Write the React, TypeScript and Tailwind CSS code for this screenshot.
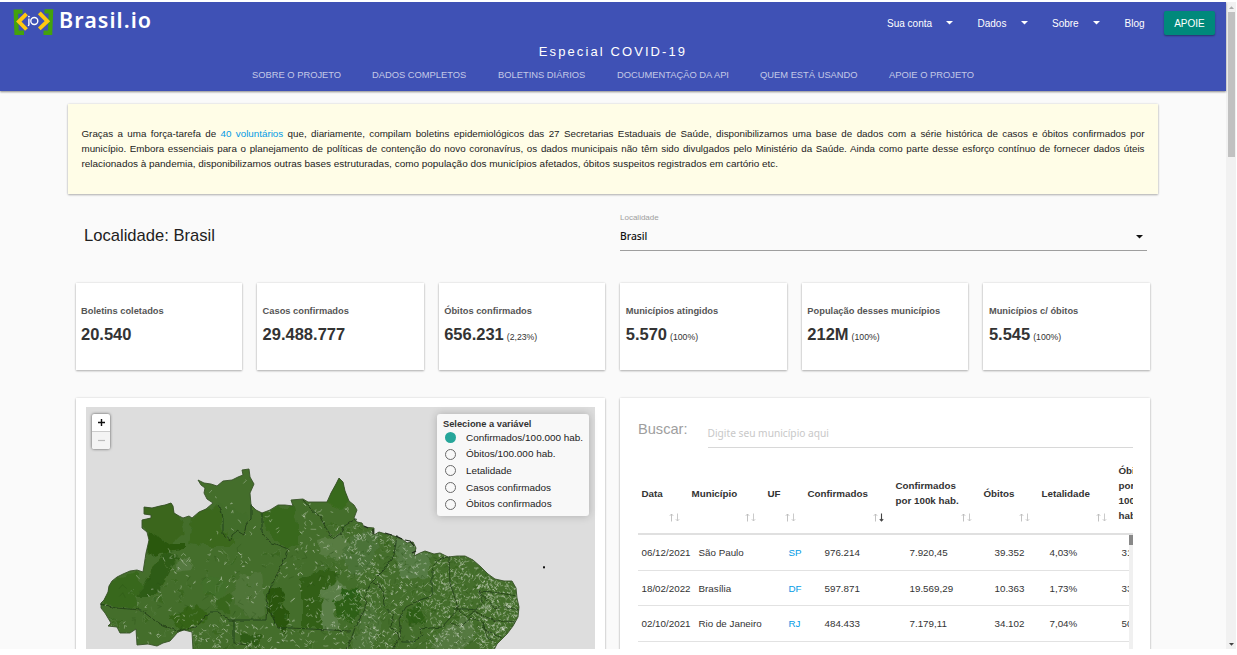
import React from "react";

const OUTLINE =
  "M101 603 L104 600 L108 592 L109 586 L112 581 L117 577 L123 574 L130 571 L137 570 L143 572 L146 553 L149 540 L147 532 L142 528 L142 520 L151 518 L151 515 L144 514 L144 507 L152 508 L160 506 L165 505 L171 503 L173 506 L174 513 L179 516 L183 518 L189 516 L192 518 L199 512 L206 509 L213 503 L207 499 L204 493 L205 488 L201 485 L198 480 L204 483 L211 484 L217 486 L223 481 L232 480 L238 477 L243 475 L242 470 L249 469 L250 477 L254 484 L250 493 L251 505 L256 510 L262 513 L270 510 L278 505 L285 505 L293 506 L291 500 L303 499 L308 502 L315 502 L327 502 L331 493 L336 484 L339 478 L343 482 L345 491 L349 501 L354 505 L357 510 L354 518 L357 522 L362 523 L364 527 L374 528 L374 535 L379 532 L386 534 L394 536 L402 539 L407 543 L413 542 L416 548 L414 556 L420 553 L425 551 L434 554 L440 553 L448 557 L457 556 L465 556 L473 560 L481 567 L488 574 L495 579 L504 581 L512 581 L516 588 L517 598 L519 607 L518 617 L513 626 L507 634 L502 639 L497 644 L494 650 L193 650 L192 632 L184 630 L178 632 L170 641 L163 643 L157 646 L148 644 L137 645 L136 629 L130 633 L120 633 L117 627 L108 626 L111 623 L105 613 L101 608 Z";

const PATCHES: [string, string][] = [
  ["M144 503 L172 500 L180 518 L185 532 L168 547 L149 540 L142 522Z", "#3a661d"],
  ["M148 531 L160 538 L170 543 L185 543 L185 551 L160 553 L152 556 L146 550Z", "#2c5810"],
  ["M192 518 L219 503 L223 528 L233 546 L206 546 L188 544Z", "#3b681e"],
  ["M165 552 L178 556 L165 580 L157 595 L138 595 L151 570Z", "#2f5c14"],
  ["M104 605 L110 581 L138 571 L142 590 L136 600 L141 609Z", "#38671e"],
  ["M262 513 L293 505 L299 528 L299 545 L287 549 L267 534Z", "#38681d"],
  ["M218 502 L230 508 L248 515 L244 535 L232 541 L224 526Z", "#426d2a"],
  ["M272 586 L285 591 L282 603 L289 612 L289 636 L278 628 L271 616 L266 597Z", "#295610"],
  ["M301 577 L325 570 L339 573 L334 588 L321 594 L323 628 L301 628Z", "#305f16"],
  ["M321 591 L340 580 L351 592 L337 599 L334 613 L340 629 L323 629Z", "#5a7e46"],
  ["M335 601 L353 590 L362 604 L353 624 L338 616Z", "#2e6017"],
  ["M334 485 L339 477 L347 490 L349 503 L340 510 L327 502Z", "#386b1b"],
  ["M318 540 L342 534 L351 548 L342 561 L320 556Z", "#587c43"],
  ["M170 617 L198 604 L207 618 L193 627 L179 632Z", "#356419"],
  ["M241 632 L262 636 L258 646 L243 642Z", "#2e5c14"],
  ["M356 532 L381 530 L371 566 L354 578 L341 555Z", "#4c7338"],
  ["M395 535 L409 538 L418 554 L432 552 L428 577 L401 580Z", "#567b44"],
  ["M406 611 L421 602 L425 620 L409 626Z", "#2e5e15"],
  ["M440 630 L466 616 L476 631 L463 650 L429 650Z", "#547941"],
  ["M341 588 L357 589 L360 599 L343 601Z", "#2b5e12"],
  ["M365 610 L375 602 L381 629 L370 650 L350 650Z", "#4e7538"],
  ["M178 560 L189 556 L191 569 L176 571Z", "#54793f"],
  ["M239 575 L262 572 L266 615 L249 619 L232 597Z", "#507439"],
  ["M215 594 L231 595 L230 615 L217 610Z", "#38661f"],
  ["M203 577 L213 575 L231 585 L218 600 L201 590Z", "#42702a"],
];

const BORDERS = [
  "M101 604 L116 608 L141 610 L158 623 L177 631 L196 627 L206 616 L212 612 L218 612 L229 620 L266 620 L267 607 L266 597 L289 549",
  "M269 609 L278 628 L291 628 L350 631",
  "M218 505 L221 510 L223 518 L223 534 L231 541 L232 535 L237 531 L244 535 L246 525 L251 519 L251 505",
  "M262 513 L262 533 L270 542 L288 549",
  "M303 500 L310 508 L320 517 L326 528 L333 539 L341 533 L343 527 L357 518",
  "M397 536 L394 555 L384 570 L371 583 L366 594 L365 609 L355 628 L347 650",
  "M371 583 L379 584 L383 593 L384 605 L393 615 L391 627 L398 634 L401 642 L414 642 L423 635 L420 629 L442 627 L458 609 L454 595 L450 583 L449 557",
  "M448 557 L436 561 L432 571 L432 596 L418 601 L406 607 L399 619 L401 636",
  "M454 609 L467 609 L476 610 L482 602 L479 591 L493 592 L517 596",
  "M479 591 L487 600 L495 609 L503 606 L519 610",
  "M459 610 L467 617 L475 611 L483 616 L496 621 L515 623",
  "M450 622 L460 627 L471 618 L482 622 L485 630 L502 638",
  "M483 622 L487 637 L497 644",
  "M234 620 L234 643 L246 645 L252 650",
  "M401 635 L392 650",
];

// Deterministic generator, so the municipal mesh is stable between renders.
function makeRandom(seed: number) {
  let s = seed;
  return () => {
    s = (s * 1664525 + 1013904223) % 4294967296;
    return s / 4294967296;
  };
}

function mesh(seed: number, n: number, x0: number, y0: number, w: number, h: number, len: number) {
  const r = makeRandom(seed);
  let d = "";
  for (let i = 0; i < n; i++) {
    const x = x0 + r() * w;
    const y = y0 + r() * h;
    const a = (r() - 0.5) * 2 * len;
    const b = (r() - 0.5) * 2 * len;
    const c = (r() - 0.5) * 2 * len;
    const e = (r() - 0.5) * 2 * len;
    d += `M${x.toFixed(1)} ${y.toFixed(1)}l${a.toFixed(1)} ${b.toFixed(1)}l${c.toFixed(1)} ${e.toFixed(1)}`;
  }
  return d;
}

const LIGHT = [
  mesh(7, 120, 100, 550, 200, 100, 3),
  mesh(9, 50, 205, 475, 160, 90, 3),
  mesh(21, 190, 300, 510, 80, 140, 3),
  mesh(35, 420, 355, 530, 110, 120, 2.8),
  mesh(43, 360, 430, 555, 92, 95, 2.5),
  mesh(57, 270, 478, 580, 42, 68, 2.4),
  mesh(81, 90, 180, 625, 130, 25, 3),
].join("");
const DARK = [
  mesh(12, 70, 100, 550, 260, 100, 5),
  mesh(15, 200, 355, 530, 165, 120, 4),
].join("");
const TONE = [
  mesh(91, 70, 110, 550, 200, 100, 7),
  mesh(95, 220, 320, 520, 200, 130, 6),
].join("");

function BrazilMap() {
  return (
    <svg className="block h-[242px] w-[509px]" viewBox="86 407 509 242">
      <defs>
        <clipPath id="land">
          <path d={OUTLINE} />
        </clipPath>
        <filter id="rough" x="-5%" y="-5%" width="110%" height="110%">
          <feTurbulence type="fractalNoise" baseFrequency="0.11" numOctaves="2" seed="4" />
          <feDisplacementMap in="SourceGraphic" scale="10" xChannelSelector="R" yChannelSelector="G" />
        </filter>
        <filter id="wavy" x="-5%" y="-5%" width="110%" height="110%">
          <feTurbulence type="fractalNoise" baseFrequency="0.2" numOctaves="2" seed="8" />
          <feDisplacementMap in="SourceGraphic" scale="3.5" xChannelSelector="R" yChannelSelector="G" />
        </filter>
      </defs>
      <path d={OUTLINE} fill="#446e2b" />
      <g clipPath="url(#land)">
        <g filter="url(#rough)">
          {PATCHES.map(([d, fill]) => (
            <path key={d} d={d} fill={fill} />
          ))}
          <path d={TONE} fill="#2f6015" fillOpacity="0.5" stroke="#6a8d57" strokeOpacity="0.4" strokeWidth="0.9" />
        </g>
        <path d={DARK} fill="none" stroke="#294f17" strokeOpacity="0.4" strokeWidth="0.7" />
        <path d={LIGHT} fill="none" stroke="#dfe7da" strokeOpacity="0.6" strokeWidth="0.6" />
      </g>
      <path d={OUTLINE} fill="none" stroke="#385128" strokeWidth="0.9" />
      <g filter="url(#wavy)">
        {BORDERS.map((d) => (
          <path key={d} d={d} fill="none" stroke="#203b17" strokeWidth="0.8" strokeLinejoin="round" />
        ))}
      </g>
      <path d="M364 526l4 2m5 1v5m12-1l7 2m4 1l6 3m3 1l5 1l4 5m-2 7l4-2" stroke="#1d2b18" strokeWidth="1.2" fill="none" />
      <rect x="543" y="566.300" width="2" height="2" fill="#111" />
    </svg>
  );
}

function Logo() {
  return (
    <svg className="h-[28px] w-[42px] shrink-0" viewBox="12 7 42 28" fill="none">
      <path d="M22.500 11.600H15.800L16.600 32.800H24" stroke="#43a20b" strokeWidth="4.400" />
      <path d="M44.500 11.400H51L50.100 32.800H43.500" stroke="#43a20b" strokeWidth="4.400" />
      <path d="M26.500 13.800L18.800 21.500L26.500 29.500" stroke="#ffc810" strokeWidth="3.900" />
      <path d="M39.300 12.800L47.400 21.200L39.300 28.800" stroke="#ffc810" strokeWidth="3.900" />
      <path d="M28.900 18.600V24.800L28.200 26" stroke="#fff" strokeWidth="1.400" />
      <circle cx="28.900" cy="16.600" r="0.900" fill="#fff" />
      <circle cx="34.300" cy="21" r="3.500" stroke="#fff" strokeWidth="1.400" />
    </svg>
  );
}

function Caret({ className }: { className: string }) {
  return (
    <svg className={className} viewBox="0 0 7 4">
      <path d="M0 0H7L3.500 3.600Z" fill="currentColor" />
    </svg>
  );
}

const MENU = [
  { label: "Sua conta", w: "w-[90.500px]", gap: "w-[59px]" },
  { label: "Dados", w: "w-[74.500px]", gap: "w-[43px]" },
  { label: "Sobre", w: "w-[72.500px]", gap: "w-[41px]" },
];

const TABS = [
  { label: "SOBRE O PROJETO", w: "w-[120px]" },
  { label: "DADOS COMPLETOS", w: "w-[126px]" },
  { label: "BOLETINS DIÁRIOS", w: "w-[119px]" },
  { label: "DOCUMENTAÇÃO DA API", w: "w-[143px]" },
  { label: "QUEM ESTÁ USANDO", w: "w-[129px]" },
  { label: "APOIE O PROJETO", w: "w-[100px]" },
];

const STATS = [
  { label: "Boletins coletados", value: "20.540", extra: "" },
  { label: "Casos confirmados", value: "29.488.777", extra: "" },
  { label: "Óbitos confirmados", value: "656.231", extra: "(2,23%)" },
  { label: "Municípios atingidos", value: "5.570", extra: "(100%)" },
  { label: "População desses municípios", value: "212M", extra: "(100%)" },
  { label: "Municípios c/ óbitos", value: "5.545", extra: "(100%)" },
];

const VARIABLES = [
  "Confirmados/100.000 hab.",
  "Óbitos/100.000 hab.",
  "Letalidade",
  "Casos confirmados",
  "Óbitos confirmados",
];

const COLUMNS = [
  ["Data"],
  ["Município"],
  ["UF"],
  ["Confirmados"],
  ["Confirmados", "por 100k hab."],
  ["Óbitos"],
  ["Letalidade"],
  ["Óbitos", "por", "100k", "hab."],
];

const ROWS = [
  ["06/12/2021", "São Paulo", "SP", "976.214", "7.920,45", "39.352", "4,03%", "319"],
  ["18/02/2022", "Brasília", "DF", "597.871", "19.569,29", "10.363", "1,73%", "339"],
  ["02/10/2021", "Rio de Janeiro", "RJ", "484.433", "7.179,11", "34.102", "7,04%", "505"],
];

const SHADOW = "shadow-[0_1px_2px_rgba(0,0,0,0.28),0_0_2px_rgba(0,0,0,0.12)]";

function SortArrows({ active }: { active: boolean }) {
  return (
    <svg className="h-[9px] w-[11px]" viewBox="0 0 11 9" fill="none" strokeWidth="0.9">
      <path d="M2.500 8.500V1M0.800 2.800L2.500 1L4.200 2.800" stroke="#bbb" />
      <path d="M8.500 0.500V8M6.800 6.200L8.500 8L10.200 6.200" stroke={active ? "#444" : "#c4c4c4"} strokeWidth={active ? 1.1 : 0.9} />
    </svg>
  );
}

function Header() {
  return (
    <header className="relative z-10 flex h-[89px] w-[1226px] flex-col bg-[#3f51b5] text-white shadow-[0_1px_2px_rgba(0,0,0,0.45)]">
      <div className="flex h-[41px] justify-between">
        <div className="flex items-start pt-[5px] pl-[12px]">
          <Logo />
          <span className="ml-[5px] font-['Noto_Sans'] text-[21.5px] leading-[25px] font-semibold tracking-[1.05px]">
            Brasil.io
          </span>
        </div>
        <nav className="flex h-[42px] items-center pl-px text-[10px]">
          {MENU.map((m) => (
            <div key={m.label} className={`flex items-center ${m.w}`}>
              <span className={m.gap}>{m.label}</span>
              <Caret className="h-[4px] w-[7px]" />
            </div>
          ))}
          <span className="w-[39.500px]">Blog</span>
          <button className="mr-[11px] h-[24px] w-[51px] rounded-[2px] bg-[#00897b] text-[10px] shadow-[0_1px_2px_rgba(0,0,0,0.4)]">
            APOIE
          </button>
        </nav>
      </div>
      <div className="flex h-[16px] items-center justify-center pt-[1px] text-[13px] tracking-[2.1px]">
        Especial COVID-19
      </div>
      <div className="flex h-[32px] items-center pt-px pl-[252px] text-[9.35px] whitespace-nowrap text-white/70">
        {TABS.map((t) => (
          <span key={t.label} className={t.w}>
            {t.label}
          </span>
        ))}
      </div>
    </header>
  );
}

function Intro() {
  return (
    <section className={`mt-[13px] ml-[68px] h-[90px] w-[1090px] bg-[#fffde7] px-[13.500px] pt-[22px] leading-[15px] whitespace-nowrap text-[#222] ${SHADOW}`}>
      <p className="w-[1063px] text-[9.8px] [text-align-last:justify]">
        Graças a uma força-tarefa de <a className="text-[#039be5]">40 voluntários</a> que, diariamente, compilam boletins
        epidemiológicos das 27 Secretarias Estaduais de Saúde, disponibilizamos uma base de dados com a série histórica de
        casos e óbitos confirmados por
      </p>
      <p className="w-[1063px] text-[9.8px] [text-align-last:justify]">
        município. Embora essenciais para o planejamento de políticas de contenção do novo coronavírus, os dados municipais
        não têm sido divulgados pelo Ministério da Saúde. Ainda como parte desse esforço contínuo de fornecer dados úteis
      </p>
      <p className="text-[9.96px]">
        relacionados à pandemia, disponibilizamos outras bases estruturadas, como população dos municípios afetados, óbitos
        suspeitos registrados em cartório etc.
      </p>
    </section>
  );
}

function Place() {
  return (
    <section className="flex h-[89px] pl-[84px]">
      <h1 className="w-[536px] pt-[30px] text-[16.6px] leading-[24px] text-[#212121]">Localidade: Brasil</h1>
      <div className="w-[527px] pt-[19px]">
        <div className="text-[8px] leading-[10px] text-[#9e9e9e]">Localidade</div>
        <div className="flex h-[28px] items-center justify-between border-b border-[#9e9e9e] pr-[4px] text-[#111]">
          <span className="font-['Noto_Sans'] text-[10.3px] font-medium">Brasil</span>
          <Caret className="h-[4px] w-[7px]" />
        </div>
      </div>
    </section>
  );
}

function MapCard() {
  return (
    <section className={`h-[300px] w-[529px] bg-white px-[10px] pt-[9px] ${SHADOW}`}>
      <div className="relative h-[242px] w-[509px] bg-[#ddd]">
        <BrazilMap />
        <div className="absolute top-[7px] left-[6.500px] flex h-[35px] w-[18px] flex-col rounded-[2px] bg-white text-center shadow-[0_0_3px_rgba(0,0,0,0.65)]">
          <span className="flex h-[18px] items-center justify-center border-b border-[#ccc]">
            <svg className="size-[7px]" viewBox="0 0 7 7">
              <path d="M3.500 0V7M0 3.500H7" stroke="#111" strokeWidth="1.400" />
            </svg>
          </span>
          <span className="flex h-[17px] items-center justify-center rounded-b-[2px] bg-[#f4f4f4]">
            <svg className="size-[7px]" viewBox="0 0 7 7">
              <path d="M0 3.500H7" stroke="#bbb" strokeWidth="1.200" />
            </svg>
          </span>
        </div>
        <div className="absolute top-[7px] left-[351.500px] h-[102px] w-[152px] rounded-[3px] bg-[#f8f8f8] pt-[4.500px] pl-[6px] whitespace-nowrap text-[#222] shadow-[0_0_9px_rgba(0,0,0,0.22)]">
          <div className="text-[9.3px] leading-[11px] font-bold text-[#333]">Selecione a variável</div>
          {VARIABLES.map((v, i) => (
            <div key={v} className="flex h-[16.6px] items-center text-[9.95px]">
              <span
                className={
                  i === 0
                    ? "ml-[2px] size-[11px] rounded-full bg-[#26a69a]"
                    : "ml-[2px] size-[11px] rounded-full border-[1.5px] border-[#6a6a6a]"
                }
              />
              <span className="ml-[10px] pt-[1px]">{v}</span>
            </div>
          ))}
        </div>
      </div>
    </section>
  );
}

function TableCard() {
  return (
    <section className={`h-[300px] w-[530px] bg-white pl-[18px] ${SHADOW}`}>
      <div className="flex h-[50px] w-[495px] items-start">
        <span className="w-[69.500px] pt-[21px] text-[14.6px] leading-[20px] text-[#9e9e9e]">Buscar:</span>
        <span className="mt-[23px] h-[27px] grow border-b border-[#d8d8d8] pt-[3px] font-['Noto_Sans'] text-[10.2px] leading-[18px] text-[#c8c8c8]">
          Digite seu município aqui
        </span>
      </div>
      <div className="grid h-[87px] w-[495px] grid-cols-[50px_76px_40px_88px_88px_58px_77px_60px] overflow-hidden border-b-2 border-[#e0e0e0] pl-[3.500px] text-[9.8px] leading-[15px] font-bold whitespace-nowrap text-[#333]">
        {COLUMNS.map((lines, i) => (
          <div key={i} className="relative flex flex-col pt-[14.500px]">
            <div className="flex h-[61px] flex-col justify-center">
              {lines.map((l) => (
                <span key={l}>{l}</span>
              ))}
            </div>
            {i < 7 && (
              <div className="absolute right-[11.500px] bottom-[11px]">
                <SortArrows active={i === 3} />
              </div>
            )}
          </div>
        ))}
      </div>
      <div className="flex h-[115px] w-[495px]">
        <div className="w-[491px] overflow-hidden">
          {ROWS.map((r) => (
            <div
              key={r[0]}
              className="grid h-[35.700px] grid-cols-[57px_90px_36px_85px_85px_55px_72px_40px] items-center border-b border-[#e2e2e2] pt-[2px] pl-[3.500px] text-[9.8px] whitespace-nowrap text-[#333]"
            >
              {r.map((c, i) => (
                <span key={i} className={i === 2 ? "text-[#039be5]" : ""}>
                  {c}
                </span>
              ))}
            </div>
          ))}
        </div>
        <div className="w-[4px] bg-[#f0f0f0]">
          <div className="h-[10px] bg-[#888]" />
        </div>
      </div>
    </section>
  );
}

export default function App() {
  return (
    <div className="h-[655px] w-[1237px] overflow-hidden bg-white pt-[2px] font-['Liberation_Sans',sans-serif]">
      <div className="flex h-[647px] w-[1236px] overflow-hidden">
        <main className="w-[1226px] shrink-0 bg-[#fafafa]">
          <Header />
          <Intro />
          <Place />
          <section className="ml-[75.500px] grid w-[1074.500px] grid-cols-6 gap-[15px]">
            {STATS.map((s) => (
              <article key={s.label} className={`h-[87px] bg-white pt-[22px] pl-[5.500px] whitespace-nowrap ${SHADOW}`}>
                <div className="text-[9.3px] leading-[13px] font-bold text-[#555]">{s.label}</div>
                <div className="mt-[6px] leading-[20px] text-[#333]">
                  <b className="text-[16.5px]">{s.value}</b>
                  {s.extra && <span className="ml-[3px] text-[8.7px]">{s.extra}</span>}
                </div>
              </article>
            ))}
          </section>
          <div className="mt-[28px] ml-[75.500px] flex gap-[15.500px]">
            <MapCard />
            <TableCard />
          </div>
        </main>
        <aside className="flex w-[10px] shrink-0 flex-col items-center bg-[#f1f1f1]">
          <div className="flex h-[10px] items-center text-[#aaa]">
            <Caret className="h-[3px] w-[5px] rotate-180" />
          </div>
          <div className="h-[145px] w-[7px] bg-[#c1c1c1]" />
          <div className="flex grow items-end pb-[3px] text-[#444]">
            <Caret className="h-[3px] w-[5px]" />
          </div>
        </aside>
      </div>
    </div>
  );
}
